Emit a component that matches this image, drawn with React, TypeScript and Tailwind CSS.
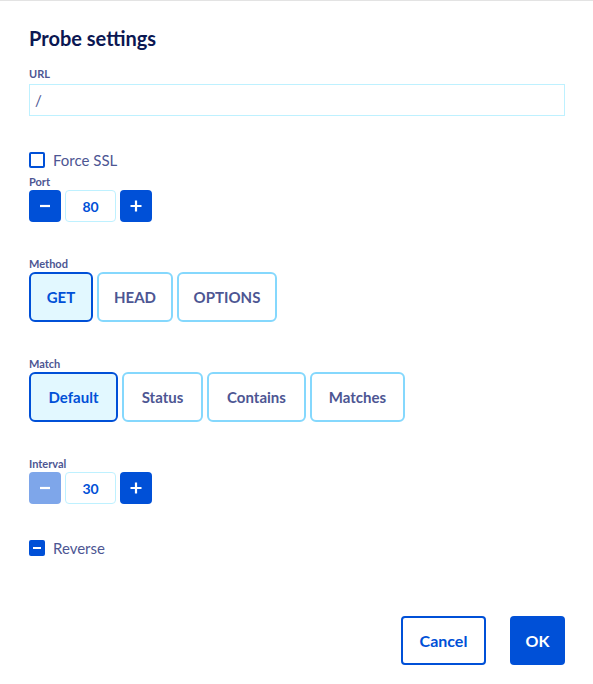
import { useState } from "react";

const FONT = { fontFamily: '"Lato", "Noto Sans", sans-serif' };

const MinusIcon = () => (
  <svg width="14" height="14" viewBox="0 0 14 14" fill="none">
    <path d="M2 7h10" stroke="white" strokeWidth="2.2" />
  </svg>
);

const PlusIcon = () => (
  <svg width="14" height="14" viewBox="0 0 14 14" fill="none">
    <path d="M1.5 7h11M7 1.5v11" stroke="white" strokeWidth="2.2" />
  </svg>
);

const Label = ({ children, className = "" }: { children: React.ReactNode; className?: string }) => (
  <div className={`text-[11px] leading-[14px] font-bold text-[#4d5693] ${className}`}>{children}</div>
);

interface StepperProps {
  value: number;
  minDisabled?: boolean;
}

const Stepper = ({ value, minDisabled }: StepperProps) => (
  <div className="flex items-center gap-1">
    <button
      className={`w-8 h-8 rounded-[4px] bg-[#0050d7] flex items-center justify-center ${minDisabled ? "opacity-50" : ""}`}
    >
      <MinusIcon />
    </button>
    <div className="w-[51px] h-8 rounded-[4px] border border-[#bef1ff] flex items-center justify-center text-[14px] font-bold text-[#0050d7]">
      {value}
    </div>
    <button className="w-8 h-8 rounded-[4px] bg-[#0050d7] flex items-center justify-center">
      <PlusIcon />
    </button>
  </div>
);

interface Option {
  label: string;
  width: string;
}

const Segmented = ({ options, selected }: { options: Option[]; selected: string }) => (
  <div className="flex gap-1">
    {options.map((o) => (
      <button
        key={o.label}
        className={`h-[50px] ${o.width} rounded-[6px] border-2 text-[15px] font-bold ${
          o.label === selected
            ? "border-[#0050d7] bg-[#e2f8ff] text-[#0050d7]"
            : "border-[#85d8fd] bg-white text-[#4d5693]"
        }`}
      >
        {o.label}
      </button>
    ))}
  </div>
);

const methods: Option[] = [
  { label: "GET", width: "w-[64px]" },
  { label: "HEAD", width: "w-[76px]" },
  { label: "OPTIONS", width: "w-[100px]" },
];

const matches: Option[] = [
  { label: "Default", width: "w-[89px]" },
  { label: "Status", width: "w-[81px]" },
  { label: "Contains", width: "w-[99px]" },
  { label: "Matches", width: "w-[95px]" },
];

export default function App() {
  const [url] = useState("/");

  return (
    <div style={FONT} className="min-h-[684px] bg-white border-t border-[#e3e3e3] pl-[29px] pr-[28px]">
      <h2 className="mt-[23px] text-[20px] leading-[28px] font-bold text-[#0b1752]">Probe settings</h2>

      <Label className="mt-[15px]">URL</Label>
      <div className="mt-[3px] h-8 border border-[#bef1ff] flex items-center px-[5px] text-[15px] text-[#4d5693]">
        {url}
      </div>

      <label className="mt-[34px] h-5 flex items-center gap-2 text-[15px] text-[#4d5693]">
        <span className="w-4 h-4 rounded-[2px] border-2 border-[#0050d7]" />
        Force SSL
      </label>

      <Label className="mt-[5px] mb-[1px]">Port</Label>
      <Stepper value={80} />

      <Label className="mt-[35px] mb-[1px]">Method</Label>
      <Segmented options={methods} selected="GET" />

      <Label className="mt-[35px] mb-[1px]">Match</Label>
      <Segmented options={matches} selected="Default" />

      <Label className="mt-[35px] mb-[1px]">Interval</Label>
      <Stepper value={30} minDisabled />

      <label className="mt-[34px] h-5 flex items-center gap-2 text-[15px] text-[#4d5693]">
        <span className="w-4 h-4 rounded-[2px] bg-[#0050d7] flex items-center justify-center">
          <span className="w-2 h-[2px] bg-white" />
        </span>
        Reverse
      </label>

      <div className="mt-[58px] flex justify-end gap-6">
        <button className="h-[49px] w-[85px] rounded-[4px] border-2 border-[#0050d7] bg-white text-[16px] font-bold text-[#0050d7]">
          Cancel
        </button>
        <button className="h-[49px] w-[55px] rounded-[4px] bg-[#0050d7] text-[16px] font-bold text-white">
          OK
        </button>
      </div>
    </div>
  );
}
